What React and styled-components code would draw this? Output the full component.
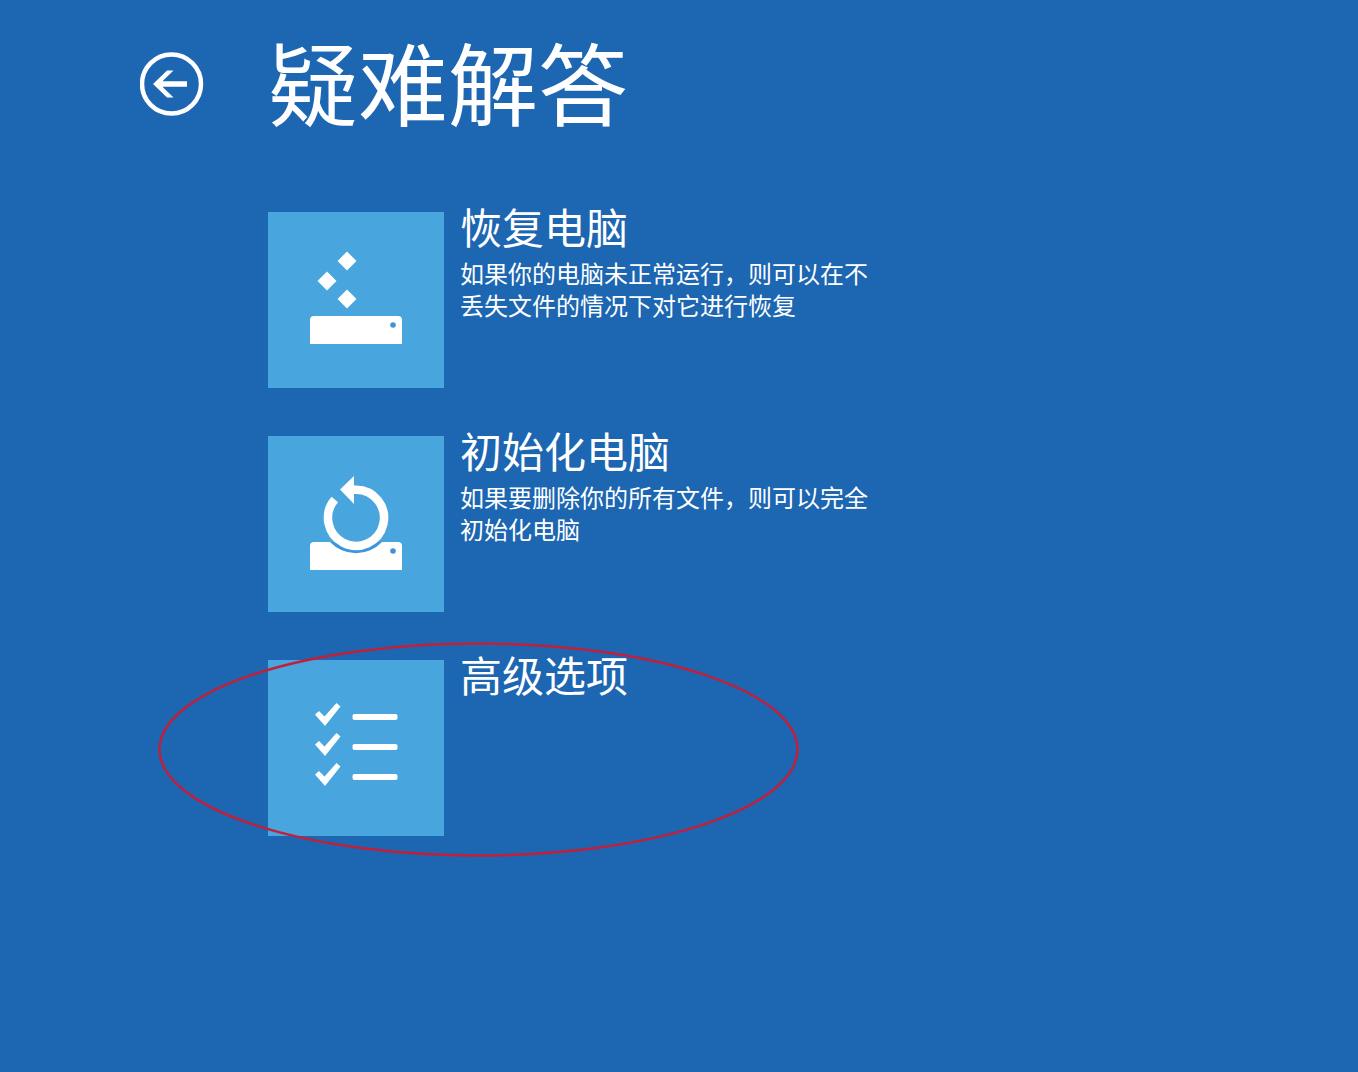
import React from 'react';
import styled, { createGlobalStyle } from 'styled-components';

const GlobalStyle = createGlobalStyle`
  *, *::before, *::after { box-sizing: border-box; }
  body {
    margin: 0;
    background: #1c66b2;
    color: #fff;
    font-family: "Noto Sans CJK SC", "Noto Sans", sans-serif;
  }
`;

const Page = styled.div`
  display: grid;
  grid-template-columns: 64px minmax(0, 1fr);
  column-gap: 64px;
  row-gap: 88px;
  min-height: 100vh;
  align-content: start;
  padding: 36px 32px 48px 140px;
`;

const BackButton = styled.button`
  align-self: start;
  width: 64px;
  height: 64px;
  margin: 16px 0 0;
  padding: 0;
  border: 0;
  border-radius: 50%;
  background: transparent;
  color: inherit;
  cursor: pointer;

  svg { display: block; }
`;

const Title = styled.h1`
  margin: 0;
  font-size: 90px;
  line-height: 88px;
  font-weight: 400;
`;

const OptionList = styled.ul`
  grid-column: 2;
  display: flex;
  flex-direction: column;
  gap: 48px;
  margin: 0;
  padding: 0;
  list-style: none;
`;

const OptionItem = styled.li`
  position: relative;
`;

const OptionButton = styled.button`
  display: flex;
  align-items: flex-start;
  gap: 16px;
  padding: 0;
  border: 0;
  background: transparent;
  color: inherit;
  font: inherit;
  text-align: left;
  cursor: pointer;
`;

const Tile = styled.span`
  flex: none;
  width: 176px;
  height: 176px;
  background: #49a5de;

  svg { display: block; }
`;

const OptionText = styled.span`
  display: flex;
  flex-direction: column;
  gap: 17px;
  max-width: 416px;
`;

const OptionName = styled.span`
  font-size: 42px;
  line-height: 28px;
`;

const OptionDescription = styled.span`
  font-size: 24px;
  line-height: 32px;
`;

const Highlight = styled.svg`
  position: absolute;
  top: -18px;
  left: -110px;
  width: 642px;
  height: 215px;
  pointer-events: none;
`;

function BackIcon() {
  return (
    <svg width="64" height="64" viewBox="0 0 64 64" fill="none" aria-hidden="true">
      <circle cx="31.5" cy="32" r="29.5" stroke="#fff" strokeWidth="4.5" />
      <path d="M13 32L27 18.5H33.5L22.5 29.3H47V34.7H22.5L33.5 45.5H27Z" fill="#fff" />
    </svg>
  );
}

function RefreshIcon() {
  return (
    <svg width="176" height="176" viewBox="0 0 176 176" aria-hidden="true">
      <g fill="#fff">
        <path d="M79 39.5L88.5 49L79 58.5L69.5 49Z" />
        <path d="M59 59.5L68.5 69L59 78.5L49.5 69Z" />
        <path d="M79 77.5L88.5 87L79 96.5L69.5 87Z" />
        <path d="M42 132V108Q42 104 46 104H130Q134 104 134 108V132Z" />
      </g>
      <circle cx="125" cy="113" r="2.8" fill="#3f92dc" />
    </svg>
  );
}

function ResetIcon() {
  return (
    <svg width="176" height="176" viewBox="0 0 176 176" aria-hidden="true">
      <path d="M42 134V110Q42 106 46 106H130Q134 106 134 110V134Z" fill="#fff" />
      <path d="M62 106A35.5 35.5 0 0 0 114 106Z" fill="#3f96df" />
      <path d="M85 53.8H88A28 28 0 1 1 66.8 63.5" fill="none" stroke="#fff" strokeWidth="8.5" />
      <path d="M72 53.5L86 40V68Z" fill="#fff" />
      <circle cx="125" cy="115" r="2.8" fill="#3f92dc" />
    </svg>
  );
}

function ChecklistIcon() {
  return (
    <svg width="176" height="176" viewBox="0 0 176 176" aria-hidden="true">
      {[57, 87, 117].map((y) => (
        <g key={y}>
          <path
            d={`M47 ${y - 2.5}L51 ${y - 6}L56.5 ${y - 0.5}L68.5 ${y - 14}L72.5 ${y - 10.5}L57 ${y + 9}Z`}
            fill="#fff"
          />
          <rect x="84.5" y={y - 3} width="45" height="6" rx="2" fill="#fff" />
        </g>
      ))}
    </svg>
  );
}

const options = [
  {
    name: '恢复电脑',
    description: '如果你的电脑未正常运行，则可以在不丢失文件的情况下对它进行恢复',
    Icon: RefreshIcon,
  },
  {
    name: '初始化电脑',
    description: '如果要删除你的所有文件，则可以完全初始化电脑',
    Icon: ResetIcon,
  },
  { name: '高级选项', Icon: ChecklistIcon, highlighted: true },
];

function Option({ name, description, Icon, highlighted }) {
  return (
    <OptionItem>
      <OptionButton type="button">
        <Tile><Icon /></Tile>
        <OptionText>
          <OptionName>{name}</OptionName>
          {description && <OptionDescription>{description}</OptionDescription>}
        </OptionText>
      </OptionButton>
      {highlighted && (
        <Highlight viewBox="0 0 642 215" aria-hidden="true">
          <ellipse cx="320.5" cy="107.5" rx="319" ry="106" fill="none" stroke="#c41f38" strokeWidth="2.4" />
        </Highlight>
      )}
    </OptionItem>
  );
}

export default function App() {
  return (
    <>
      <GlobalStyle />
      <Page as="main">
        <BackButton type="button" aria-label="返回"><BackIcon /></BackButton>
        <Title>疑难解答</Title>
        <OptionList>
          {options.map((option) => <Option key={option.name} {...option} />)}
        </OptionList>
      </Page>
    </>
  );
}
